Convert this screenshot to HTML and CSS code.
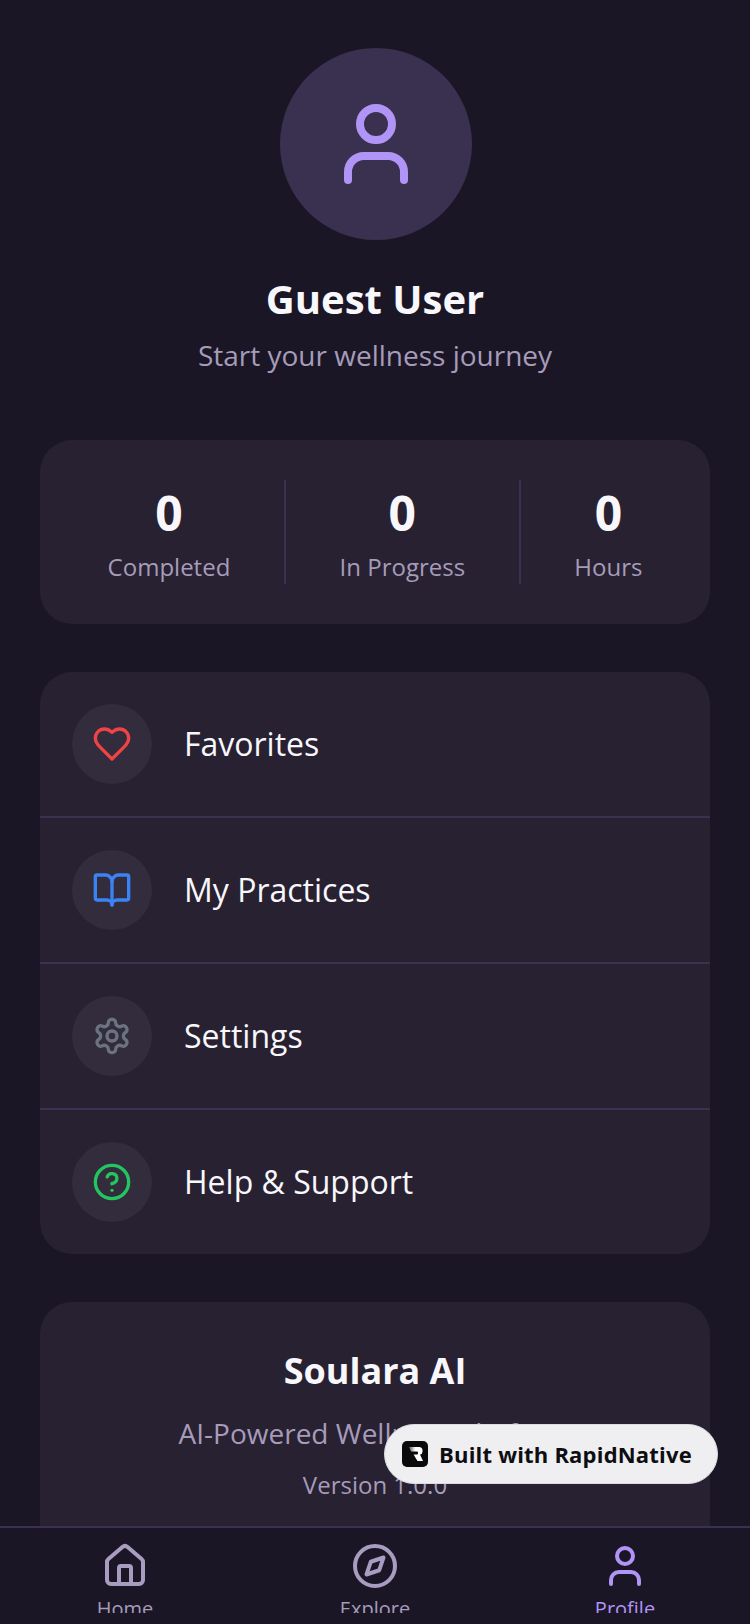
FILE: index.html
```html
<!DOCTYPE html>
<html lang="en">
  <head>
    <meta charset="UTF-8" />
    <meta name="viewport" content="width=device-width, initial-scale=1.0" />
    <title>Profile</title>
    <link rel="stylesheet" href="styles.css">
  </head>
  <body>
    <div class="screen">
      <main class="content">
        <section class="profile">
          <div class="avatar">
            <svg class="icon" width="96" height="96" viewBox="0 0 24 24" stroke="#b094f6"><path d="M19 21v-2a4 4 0 0 0-4-4H9a4 4 0 0 0-4 4v2"/><circle cx="12" cy="7" r="4"/></svg>
          </div>
          <h1>Guest User</h1>
          <p class="tagline">Start your wellness journey</p>
        </section>

        <section class="card stats">
          <div class="stat">
            <div class="stat-value">0</div>
            <div class="stat-label">Completed</div>
          </div>
          <div class="stat-divider"></div>
          <div class="stat">
            <div class="stat-value">0</div>
            <div class="stat-label">In Progress</div>
          </div>
          <div class="stat-divider"></div>
          <div class="stat">
            <div class="stat-value">0</div>
            <div class="stat-label">Hours</div>
          </div>
        </section>

        <section class="card menu">
          <div class="menu-item">
            <div class="menu-icon">
              <svg class="icon" width="40" height="40" viewBox="0 0 24 24" stroke="#ef4444"><path d="M19 14c1.49-1.46 3-3.21 3-5.5A5.5 5.5 0 0 0 16.5 3c-1.76 0-3 .5-4.5 2-1.5-1.5-2.74-2-4.5-2A5.5 5.5 0 0 0 2 8.5c0 2.3 1.5 4.05 3 5.5l7 7Z"/></svg>
            </div>
            <span class="menu-label">Favorites</span>
          </div>
          <div class="menu-item">
            <div class="menu-icon">
              <svg class="icon" width="40" height="40" viewBox="0 0 24 24" stroke="#3b82f6"><path d="M12 7v14"/><path d="M3 18a1 1 0 0 1-1-1V4a1 1 0 0 1 1-1h5a4 4 0 0 1 4 4 4 4 0 0 1 4-4h5a1 1 0 0 1 1 1v13a1 1 0 0 1-1 1h-6a3 3 0 0 0-3 3 3 3 0 0 0-3-3z"/></svg>
            </div>
            <span class="menu-label">My Practices</span>
          </div>
          <div class="menu-item">
            <div class="menu-icon">
              <svg class="icon" width="40" height="40" viewBox="0 0 24 24" stroke="#6b7280"><path d="M12.22 2h-.44a2 2 0 0 0-2 2v.18a2 2 0 0 1-1 1.73l-.43.25a2 2 0 0 1-2 0l-.15-.08a2 2 0 0 0-2.73.73l-.22.38a2 2 0 0 0 .73 2.73l.15.1a2 2 0 0 1 1 1.72v.51a2 2 0 0 1-1 1.74l-.15.09a2 2 0 0 0-.73 2.73l.22.38a2 2 0 0 0 2.73.73l.15-.08a2 2 0 0 1 2 0l.43.25a2 2 0 0 1 1 1.73V20a2 2 0 0 0 2 2h.44a2 2 0 0 0 2-2v-.18a2 2 0 0 1 1-1.73l.43-.25a2 2 0 0 1 2 0l.15.08a2 2 0 0 0 2.73-.73l.22-.39a2 2 0 0 0-.73-2.73l-.15-.08a2 2 0 0 1-1-1.74v-.5a2 2 0 0 1 1-1.74l.15-.09a2 2 0 0 0 .73-2.73l-.22-.38a2 2 0 0 0-2.73-.73l-.15.08a2 2 0 0 1-2 0l-.43-.25a2 2 0 0 1-1-1.73V4a2 2 0 0 0-2-2z"/><circle cx="12" cy="12" r="3"/></svg>
            </div>
            <span class="menu-label">Settings</span>
          </div>
          <div class="menu-item">
            <div class="menu-icon">
              <svg class="icon" width="40" height="40" viewBox="0 0 24 24" stroke="#22c55e"><circle cx="12" cy="12" r="10"/><path d="M9.09 9a3 3 0 0 1 5.83 1c0 2-3 3-3 3"/><path d="M12 17h.01"/></svg>
            </div>
            <span class="menu-label">Help &amp; Support</span>
          </div>
        </section>

        <section class="card about">
          <h2>Soulara AI</h2>
          <p class="about-sub">AI-Powered Wellness Platform</p>
          <p class="about-version">Version 1.0.0</p>
        </section>
      </main>

      <nav class="tabbar">
        <div class="tab">
          <svg class="icon" width="48" height="48" viewBox="0 0 24 24" stroke="#a89cc0"><path d="M15 21v-8a1 1 0 0 0-1-1h-4a1 1 0 0 0-1 1v8"/><path d="M3 10a2 2 0 0 1 .709-1.528l7-5.999a2 2 0 0 1 2.582 0l7 5.999A2 2 0 0 1 21 10v9a2 2 0 0 1-2 2H5a2 2 0 0 1-2-2z"/></svg>
          <span>Home</span>
        </div>
        <div class="tab">
          <svg class="icon" width="48" height="48" viewBox="0 0 24 24" stroke="#a89cc0"><circle cx="12" cy="12" r="10"/><path d="m16.24 7.76-2.12 6.36-6.36 2.12 2.12-6.36 6.36-2.12z"/></svg>
          <span>Explore</span>
        </div>
        <div class="tab tab-active">
          <svg class="icon" width="48" height="48" viewBox="0 0 24 24" stroke="#b094f6"><path d="M19 21v-2a4 4 0 0 0-4-4H9a4 4 0 0 0-4 4v2"/><circle cx="12" cy="7" r="4"/></svg>
          <span>Profile</span>
        </div>
      </nav>

      <div class="built-badge">
        <svg class="built-logo" width="26" height="26" viewBox="0 0 26 26">
          <defs>
            <linearGradient id="logoFade" x1="0" x2="1" y1="0" y2="0">
              <stop offset="0" stop-color="#555"/>
              <stop offset="0.45" stop-color="#fff"/>
            </linearGradient>
          </defs>
          <rect width="26" height="26" rx="5" fill="#0a0a0a"/>
          <path d="M7 6h10a3.500 3.500 0 0 1 3.500 3.500v1a3 3 0 0 1-2.500 3l3 6.500h-5.500l-4-6.500h3.500a1 1 0 0 0 1-1v-1a1 1 0 0 0-1-1H9z" fill="url(#logoFade)"/>
        </svg>
        <span>Built with RapidNative</span>
      </div>
    </div>
  </body>
</html>
```

FILE: styles.css
```css
* {
  box-sizing: border-box;
}
html,
body {
  margin: 0;
  padding: 0;
}
body {
  font-family: "Open Sans", "Noto Sans", sans-serif;
  background: #1a1625;
  color: #f8f7fc;
}
h1,
h2,
p {
  margin: 0;
}
.icon {
  display: block;
  flex: none;
  fill: none;
  stroke-width: 2;
  stroke-linecap: round;
  stroke-linejoin: round;
}
.screen {
  position: relative;
  width: 750px;
  height: 1624px;
  display: flex;
  flex-direction: column;
  overflow: hidden;
}
.content {
  flex: 1;
  min-height: 0;
  overflow: hidden;
  padding: 48px 40px 0;
}
.profile {
  display: flex;
  flex-direction: column;
  align-items: center;
  margin-bottom: 65px;
}
.avatar {
  width: 192px;
  height: 192px;
  border-radius: 50%;
  background: #3a3150;
  display: flex;
  align-items: center;
  justify-content: center;
  margin-bottom: 31px;
  margin-left: 2px;
}
h1 {
  font-size: 40px;
  line-height: 56px;
  font-weight: 700;
  margin-bottom: 8px;
}
.tagline {
  font-size: 28px;
  line-height: 40px;
  color: #a69cba;
}
.card {
  background: #282131;
  border-radius: 32px;
}
.stats {
  display: flex;
  align-items: flex-start;
  padding: 40px 14px;
  margin-bottom: 48px;
}
.stat {
  flex: 1 1 auto;
  text-align: center;
}
.stat-value {
  font-size: 48px;
  line-height: 66px;
  font-weight: 700;
  margin-bottom: 5px;
}
.stat-label {
  font-size: 24px;
  line-height: 32px;
  color: #a69cba;
}
.stat-divider {
  width: 2px;
  height: 104px;
  background: #3a3150;
}
.menu {
  margin-bottom: 48px;
  overflow: hidden;
}
.menu-item {
  display: flex;
  align-items: center;
  gap: 32px;
  padding: 32px;
  height: 146px;
  font-size: 32px;
  border-bottom: 2px solid #3a3150;
}
.menu-item:last-child {
  border-bottom: 0;
  height: 144px;
}
.menu-label {
  line-height: 44px;
}
.menu-icon {
  width: 80px;
  height: 80px;
  border-radius: 50%;
  background: #322c3d;
  display: flex;
  align-items: center;
  justify-content: center;
}
.about {
  text-align: center;
  padding: 41px 40px 40px;
  height: 260px;
}
h2 {
  font-size: 36px;
  line-height: 56px;
  font-weight: 700;
  margin-bottom: 10px;
}
.about-sub {
  font-size: 28px;
  line-height: 48px;
  color: #a69cba;
  margin-bottom: 4px;
}
.about-version {
  font-size: 24px;
  line-height: 48px;
  color: #a69cba;
}
.tabbar {
  flex: none;
  height: 98px;
  background: #1a1625;
  border-top: 2px solid #3a3150;
  display: flex;
  justify-content: space-around;
  padding-top: 14px;
}
.tab {
  width: 160px;
  height: 71px;
  overflow: hidden;
  display: flex;
  flex-direction: column;
  align-items: center;
  gap: 5px;
  font-size: 20px;
  line-height: 28px;
  color: #a69cba;
}
.tab-active {
  color: #b094f6;
}
.built-badge {
  position: absolute;
  left: 384px;
  top: 1424px;
  width: 334px;
  height: 60px;
  border-radius: 30px;
  background: #efeff1;
  border: 1px solid #dcdce0;
  display: flex;
  align-items: center;
  gap: 11px;
  padding-left: 17px;
  color: #0d0d12;
  font-size: 22px;
  font-weight: 700;
  letter-spacing: 0.2px;
}
.built-logo {
  display: block;
  flex: none;
}
```
